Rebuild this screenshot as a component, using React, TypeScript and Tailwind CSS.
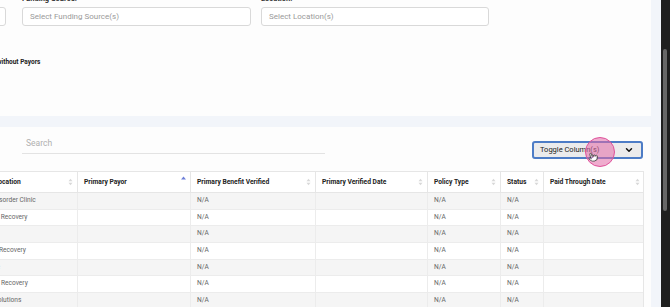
import React from "react";
import { ChevronDown, Pointer } from "lucide-react";

const cols = "grid grid-cols-[200px_111px_113px_125px_112px_73px_43px_100px]";

const headers = [
  "Client Name",
  "Center Location",
  "Primary Payor",
  "Primary Benefit Verified",
  "Primary Verified Date",
  "Policy Type",
  "Status",
  "Paid Through Date",
];

const rows = [
  { client: "Adams, Jordan", location: "Abuse Disorder Clinic" },
  { client: "Baker, Riley", location: "Roads to Recovery" },
  { client: "Carter, Sam", location: "Main" },
  { client: "Diaz, Morgan", location: "Paths to Recovery" },
  { client: "Evans, Casey", location: "Westside" },
  { client: "Foster, Drew", location: "Bridge to Recovery" },
  { client: "Garcia, Alex", location: "Health Solutions" },
];

function SortIcon({ active }: { active?: boolean }) {
  if (active) {
    return (
      <svg width="5" height="8" viewBox="0 0 5 8" className="mb-[4px]">
        <path d="M0 3.5 L2.5 0.5 L5 3.5 Z" fill="#6d7fd8" />
      </svg>
    );
  }
  return (
    <svg width="5" height="8" viewBox="0 0 5 8">
      <path d="M0.5 3.2 L2.5 0.8 L4.5 3.2 Z" fill="#d8d8d8" />
      <path d="M0.5 4.8 L2.5 7.2 L4.5 4.8 Z" fill="#d8d8d8" />
    </svg>
  );
}

function SelectBox({ placeholder, className }: { placeholder: string; className?: string }) {
  return (
    <div
      className={`h-[19px] border border-[#d9d9d9] rounded-[3px] bg-white flex items-center pl-[7px] text-[8px] text-[#9a9a9a] ${className ?? ""}`}
    >
      {placeholder}
    </div>
  );
}

export default function App() {
  return (
    <div className="flex w-[670px] h-[307px] overflow-hidden font-['Roboto',sans-serif]">
      <div className="w-[661px] h-full overflow-hidden bg-[#f2f5fa]">
        <div className="-ml-[250px] -mt-[20px] w-[901px]">
          {/* filters card */}
          <div className="bg-[#fdfdfd] pt-[13px] pb-[49px] pl-[27px]">
            <div className="flex items-end">
              <SelectBox placeholder="Select Client(s)" className="w-[229px]" />
              <div className="ml-[16px] w-[229px]">
                <div className="text-[7.5px] leading-[11px] font-bold text-[#333] mb-[3px]">Funding Source:</div>
                <SelectBox placeholder="Select Funding Source(s)" />
              </div>
              <div className="ml-[10px] w-[228px]">
                <div className="text-[7.5px] leading-[11px] font-bold text-[#333] mb-[3px]">Location:</div>
                <SelectBox placeholder="Select Location(s)" />
              </div>
            </div>
            <div className="mt-[33px] ml-[180px] h-[8px] flex items-center text-[6.5px] font-bold text-[#222]">
              Show Clients without Payors
            </div>
          </div>

          {/* table card */}
          <div className="mt-[11px] bg-[#fdfdfd] pt-[8px] pl-[16px] pr-[8px] h-[200px]">
            <div className="flex items-start">
              <div className="ml-[256px] w-[303px] h-[19px] border-b border-[#e3e3e3] pl-[4px] text-[8.5px] leading-[17px] text-[#b0b0b0]">
                Search
              </div>
              <div className="relative ml-auto mt-[6px] w-[111px] h-[18px] rounded-[3px] border-2 border-[#4d7cc6] bg-[#ebebec] flex items-center justify-between pl-[6px] pr-[7px] text-[7.5px] text-[#222]">
                <span>Toggle Column(s)</span>
                <ChevronDown size={10} strokeWidth={3.5} color="#111" />
                <div className="absolute left-[51px] top-[-6px] w-[30px] h-[30px] rounded-full bg-[#e46aa8]/55 border-[1.5px] border-[#e0529b]" />
                <Pointer
                  size={10}
                  strokeWidth={1.6}
                  color="#222"
                  fill="#fff"
                  className="absolute left-[54px] top-[9px] -rotate-12"
                />
              </div>
            </div>

            <div className="mt-[12px] border border-[#e6e6e6] w-[878px] text-[#666]">
              <div className={`${cols} h-[21px] bg-white border-b border-[#e6e6e6]`}>
                {headers.map((h, i) => (
                  <div
                    key={h}
                    className={`flex items-center justify-between pl-[6px] pr-[4px] text-[6.7px] font-bold text-[#222] ${i < headers.length - 1 ? "border-r border-[#e6e6e6]" : ""}`}
                  >
                    <span className="whitespace-nowrap">{h}</span>
                    <SortIcon active={h === "Primary Payor"} />
                  </div>
                ))}
              </div>
              {rows.map((r, idx) => (
                <div
                  key={r.client}
                  className={`${cols} h-[16.7px] border-b border-[#ececec] text-[6.6px] ${idx % 2 === 0 ? "bg-[#f5f5f5]" : "bg-white"}`}
                >
                  {[r.client, r.location, "", "N/A", "", "N/A", "N/A", ""].map((v, i) => (
                    <div
                      key={i}
                      className={`flex items-center pl-[6px] whitespace-nowrap overflow-hidden ${i < 7 ? "border-r border-[#ececec]" : ""}`}
                    >
                      {v}
                    </div>
                  ))}
                </div>
              ))}
            </div>
          </div>
        </div>
      </div>

      {/* scrollbar */}
      <div className="w-[9px] h-full bg-[#1f1f1f] pt-[49px] pl-[2px]">
        <div className="w-[4px] h-[162px] rounded-full bg-[#676767]" />
      </div>
    </div>
  );
}
